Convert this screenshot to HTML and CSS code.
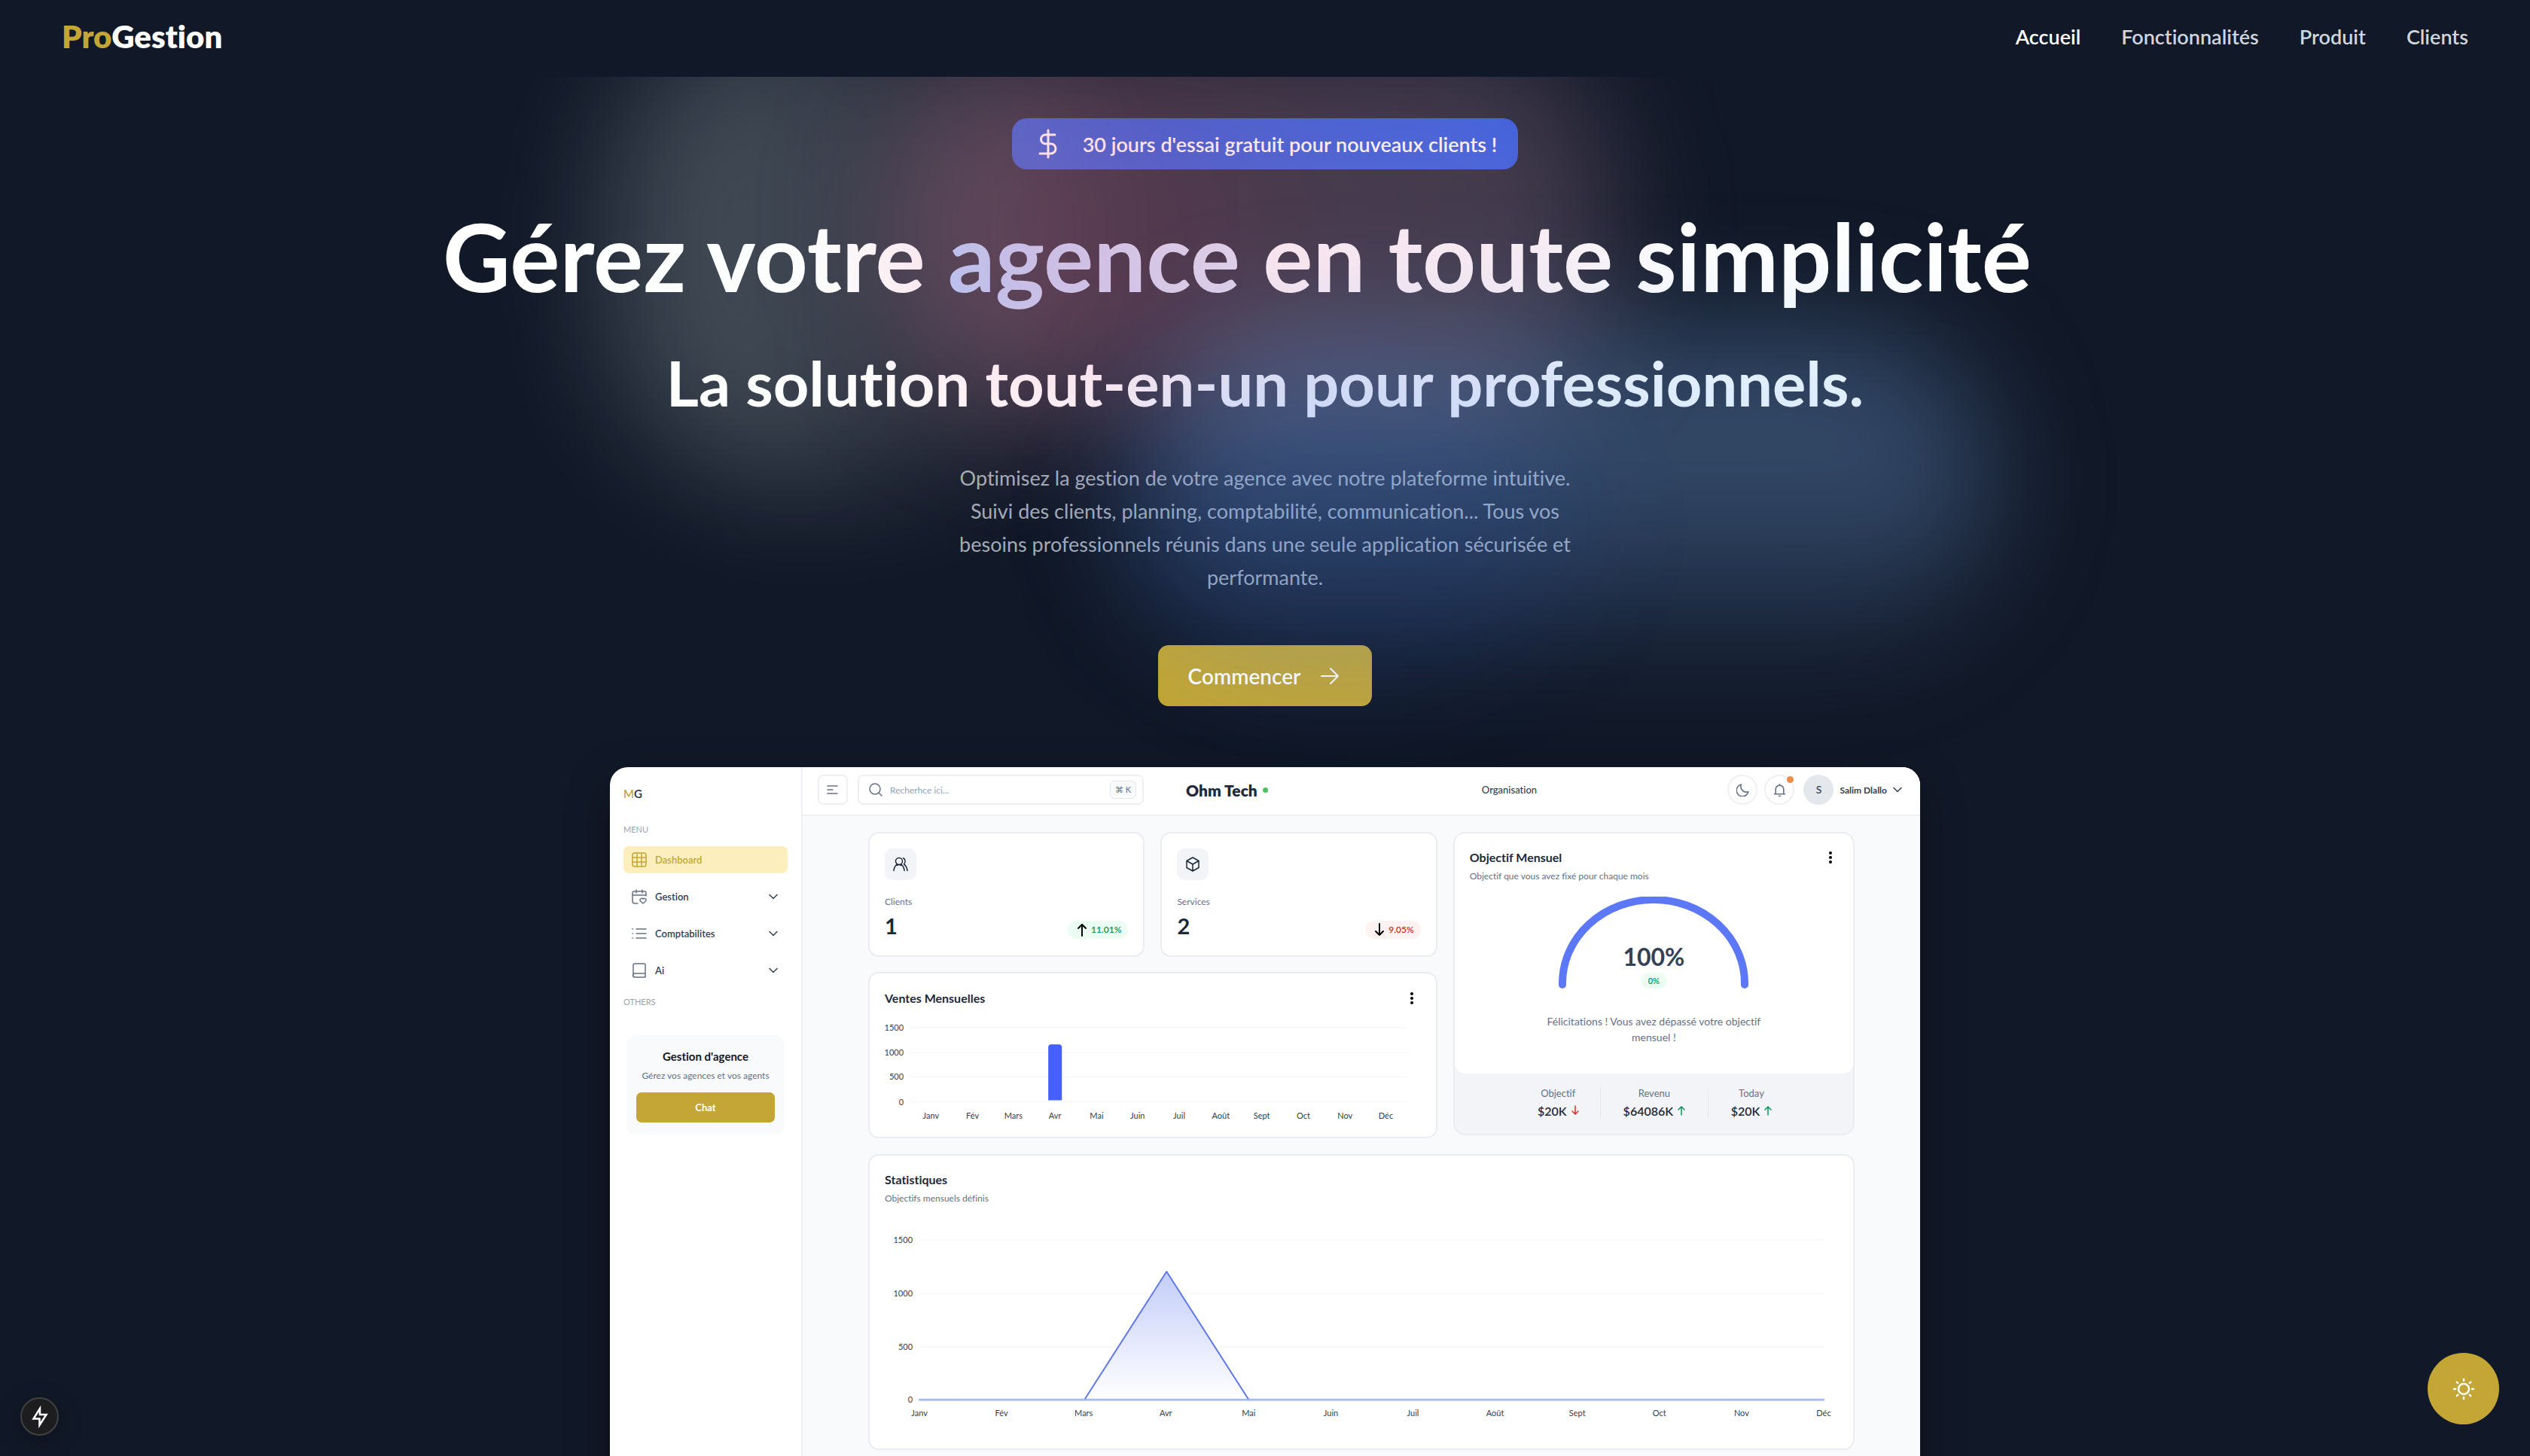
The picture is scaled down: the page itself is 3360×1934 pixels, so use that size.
FILE: index.html
```html
<!DOCTYPE html>
<html lang="fr">
<head>
<meta charset="utf-8">
<meta name="viewport" content="width=device-width, initial-scale=1">
<title>ProGestion</title>
<link rel="stylesheet" href="styles.css">
</head>
<body>
<header class="site-header">
  <a class="brand" href="#"><span class="gold">Pro</span>Gestion</a>
  <nav class="site-nav">
    <a class="current" href="#accueil">Accueil</a>
    <a href="#fonctionnalites">Fonctionnalités</a>
    <a href="#produit">Produit</a>
    <a href="#clients">Clients</a>
  </nav>
</header>

<main class="hero" id="accueil">
  <div class="glow" aria-hidden="true">
    <span class="blob blob-white"></span>
    <span class="blob blob-pink"></span>
    <span class="blob blob-blue"></span>
    <span class="blob blob-deep"></span>
  </div>

  <p class="offer">
    <svg width="28" height="40" viewBox="0 0 28 40" fill="none" stroke="currentColor" stroke-width="3" stroke-linecap="round" stroke-linejoin="round"><path d="M14 2v36M23 8H10.500a6 6 0 0 0 0 12h7a6.500 6.500 0 0 1 0 13H3"/></svg>
    30 jours d'essai gratuit pour nouveaux clients !
  </p>
  <h1>Gérez votre <span class="accent">agence</span> en toute simplicité</h1>
  <h2>La solution tout-en-un pour professionnels.</h2>
  <p class="lead">Optimisez la gestion de votre agence avec notre plateforme intuitive.<br>Suivi des clients, planning, comptabilité, communication... Tous vos<br>besoins professionnels réunis dans une seule application sécurisée et<br>performante.</p>
  <button class="cta" type="button">Commencer
    <svg width="24" height="24" viewBox="0 0 24 24" fill="none" stroke="currentColor" stroke-width="2" stroke-linecap="round" stroke-linejoin="round"><path d="M1 12h22M13 2l10 10-10 10"/></svg>
  </button>

  <section class="app" aria-label="Tableau de bord">
    <aside class="side">
      <div class="side-brand"><span class="gold">M</span>G</div>
      <h3 class="side-label">MENU</h3>
      <nav class="side-nav">
        <a class="active" href="#dashboard"><svg class="ico" viewBox="0 0 20 20"><rect x="1" y="1" width="18" height="18" rx="3"/><path d="M7 1v18M13 1v18M1 7h18M1 13h18"/></svg>Dashboard</a>
        <a href="#gestion"><svg class="ico" viewBox="0 0 20 20"><path d="M8 19H4a3 3 0 0 1-3-3V5a2 2 0 0 1 2-2h14a2 2 0 0 1 2 2v4M1 8h18M6 1v4M14 1v4M15 19l-3.500-3.200a2 2 0 0 1 3.500-2.600 2 2 0 0 1 3.500 2.600z"/></svg>Gestion<svg class="chev" viewBox="0 0 12 12"><path d="M1 3.500l5 5 5-5"/></svg></a>
        <a href="#comptabilites"><svg class="ico" viewBox="0 0 20 20"><path d="M6 4h13M6 10h13M6 16h13M1 4h.5M1 10h.5M1 16h.5"/></svg>Comptabilites<svg class="chev" viewBox="0 0 12 12"><path d="M1 3.500l5 5 5-5"/></svg></a>
        <a href="#ai"><svg class="ico" viewBox="0 0 20 20"><path d="M2 17V3a2 2 0 0 1 2-2h12a2 2 0 0 1 2 2v16H4a2 2 0 0 1 0-5h14"/></svg>Ai<svg class="chev" viewBox="0 0 12 12"><path d="M1 3.500l5 5 5-5"/></svg></a>
      </nav>
      <h3 class="side-label">OTHERS</h3>
      <div class="promo">
        <h4>Gestion d'agence</h4>
        <p>Gérez vos agences et vos agents</p>
        <button type="button">Chat</button>
      </div>
    </aside>

    <div class="work">
      <div class="topbar">
        <button class="square" type="button" aria-label="Menu"><svg viewBox="0 0 16 14"><path d="M1 2h13M1 7h7M1 12h13"/></svg></button>
        <label class="search">
          <svg viewBox="0 0 18 18"><circle cx="8" cy="8" r="7"/><path d="M13 13l4 4"/></svg>
          <input type="search" placeholder="Recherhce ici..." aria-label="Recherche">
          <kbd>⌘ K</kbd>
        </label>
        <strong class="org">Ohm Tech <i></i></strong>
        <a class="org-link" href="#organisation">Organisation</a>
        <div class="tools">
          <button class="round" type="button" aria-label="Mode sombre"><svg viewBox="0 0 16 16"><path d="M6 1a7.500 7.500 0 1 0 9 9A7 7 0 0 1 6 1z"/></svg></button>
          <button class="round bell" type="button" aria-label="Notifications"><svg viewBox="0 0 16 16"><path d="M1.500 13h13M3 13V7a5 5 0 0 1 10 0v6M7 15.500h2M8 2V.8"/></svg></button>
          <button class="user" type="button"><span class="avatar">S</span>Salim Dlallo<svg class="chev" viewBox="0 0 12 12"><path d="M1 3.500l5 5 5-5"/></svg></button>
        </div>
      </div>

      <div class="board">
        <div class="col">
          <div class="pair">
            <article class="card metric">
              <span class="tile"><svg viewBox="0 0 22 22"><circle cx="9" cy="7" r="4.500"/><path d="M2 19.500c0-4 2-6.500 4.300-8.800M11.700 10.700c2.300 2.300 4.300 4.800 4.300 8.800M6.300 12.500c1.700-1.300 3.700-1.300 5.400 0M14.500 2.800c3 1.200 3.500 5.700 1 8 2.500 2 4.200 5 4.500 8.700"/></svg></span>
              <h3>Clients</h3>
              <div class="figure"><b>1</b><span class="pill up"><svg viewBox="0 0 14 18"><path d="M7 17V2M2 7l5-5 5 5"/></svg>11.01%</span></div>
            </article>
            <article class="card metric">
              <span class="tile"><svg viewBox="0 0 22 22"><path d="M11 2l8 4.500v9L11 20l-8-4.500v-9zM3 6.500l8 4.500 8-4.500M11 11v9"/></svg></span>
              <h3>Services</h3>
              <div class="figure"><b>2</b><span class="pill down"><svg viewBox="0 0 14 18"><path d="M7 1v15M2 11l5 5 5-5"/></svg>9.05%</span></div>
            </article>
          </div>
          <article class="card sales">
            <div class="card-head"><h3>Ventes Mensuelles</h3><button class="dots" type="button" aria-label="Options"><svg viewBox="0 0 4 16"><circle cx="2" cy="2" r="2"/><circle cx="2" cy="8" r="2"/><circle cx="2" cy="14" r="2"/></svg></button></div>
            <svg class="chart" viewBox="0 0 706 140" role="img" aria-label="Ventes par mois">
              <g class="grid"><path d="M34 15h656M34 48h656M34 80h656M34 113h656"/></g>
              <g class="ylab"><text x="25" y="19">1500</text><text x="25" y="52">1000</text><text x="25" y="84">500</text><text x="25" y="117">0</text></g>
              <path class="bar" d="M216 111V41a4 4 0 0 1 4-4h10a4 4 0 0 1 4 4v70z"/>
              <g class="xlab"><text x="61" y="135">Janv</text><text x="116" y="135">Fév</text><text x="170" y="135">Mars</text><text x="225" y="135">Avr</text><text x="280" y="135">Mai</text><text x="334" y="135">Juin</text><text x="389" y="135">Juil</text><text x="444" y="135">Août</text><text x="498" y="135">Sept</text><text x="553" y="135">Oct</text><text x="608" y="135">Nov</text><text x="662" y="135">Déc</text></g>
            </svg>
          </article>
        </div>

        <article class="goal">
          <div class="goal-main">
            <div class="card-head"><h3>Objectif Mensuel</h3><button class="dots" type="button" aria-label="Options"><svg viewBox="0 0 4 16"><circle cx="2" cy="2" r="2"/><circle cx="2" cy="8" r="2"/><circle cx="2" cy="14" r="2"/></svg></button></div>
            <p class="sub">Objectif que vous avez fixé pour chaque mois</p>
            <div class="gauge">
              <svg viewBox="0 0 254 122"><path d="M6 117V115A121 111 0 0 1 248 115V117" fill="none" stroke="#5d78f7" stroke-width="10" stroke-linecap="round"/></svg>
              <div class="gauge-text"><b>100%</b><span>0%</span></div>
            </div>
            <p class="cheer">Félicitations ! Vous avez dépassé votre objectif<br>mensuel !</p>
          </div>
          <dl class="totals">
            <div><dt>Objectif</dt><dd>$20K <svg class="neg" viewBox="0 0 10 14"><path d="M5 1v11M1 8l4 4 4-4"/></svg></dd></div>
            <div><dt>Revenu</dt><dd>$64086K <svg class="pos" viewBox="0 0 10 14"><path d="M5 13V2M1 6l4-4 4 4"/></svg></dd></div>
            <div><dt>Today</dt><dd>$20K <svg class="pos" viewBox="0 0 10 14"><path d="M5 13V2M1 6l4-4 4 4"/></svg></dd></div>
          </dl>
        </article>

        <article class="card stats">
          <div class="card-head"><h3>Statistiques</h3></div>
          <p class="sub">Objectifs mensuels définis</p>
          <svg class="chart" viewBox="0 0 1263 262" role="img" aria-label="Statistiques par mois">
            <defs><linearGradient id="area" x1="0" y1="0" x2="0" y2="1"><stop offset="0" stop-color="#c3cdf9"/><stop offset="1" stop-color="#fff"/></linearGradient></defs>
            <g class="grid"><path d="M48 19h1198M48 90h1198M48 161h1198"/></g>
            <path d="M265 231L374 61l109 170z" fill="url(#area)" stroke="none"/>
            <path d="M46 231h1200" stroke="#c8d5f8" stroke-width="3"/>
            <path d="M265 231L374 61l109 170" fill="none" stroke="#5f78ea" stroke-width="2"/>
            <path d="M46 231h1200" stroke="#a0b7f0" stroke-width="2"/>
            <g class="ylab"><text x="37" y="23">1500</text><text x="37" y="94">1000</text><text x="37" y="165">500</text><text x="37" y="235">0</text></g>
            <g class="xlab"><text x="46" y="253">Janv</text><text x="155" y="253">Fév</text><text x="264" y="253">Mars</text><text x="373" y="253">Avr</text><text x="483" y="253">Mai</text><text x="592" y="253">Juin</text><text x="701" y="253">Juil</text><text x="810" y="253">Août</text><text x="919" y="253">Sept</text><text x="1028" y="253">Oct</text><text x="1137" y="253">Nov</text><text x="1246" y="253">Déc</text></g>
          </svg>
        </article>
      </div>
    </div>
  </section>
</main>

<button class="fab fab-bolt" type="button" aria-label="Outils"><svg viewBox="0 0 24 30" width="24" height="30"><path d="M12 4L3.500 17.500h8V26L20.500 12h-8.500z" fill="none" stroke="#fff" stroke-width="2.500"/></svg></button>
<button class="fab fab-theme" type="button" aria-label="Changer de thème"><svg viewBox="0 0 30 30" width="30" height="30" fill="none" stroke="#fff" stroke-width="2.500" stroke-linecap="round"><circle cx="15" cy="15" r="7"/><path d="M15 2v2M15 26v2M2 15h2M26 15h2M5.800 5.800l1.400 1.400M22.800 22.800l1.400 1.400M5.800 24.200l1.400-1.400M22.800 7.200l1.400-1.400"/></svg></button>
</body>
</html>
```
FILE: styles.css
```css
*, *::before, *::after { box-sizing: border-box; }
body {
  margin: 0;
  height: 100vh;
  display: flex;
  flex-direction: column;
  overflow: hidden;
  background: #111827;
  color: #fff;
  font-family: Lato, "Liberation Sans", sans-serif;
  font-variant-ligatures: no-common-ligatures;
}
h1, h2, h3, h4, p, dl, dd { margin: 0; }
a { color: inherit; text-decoration: none; }
button, input { font: inherit; color: inherit; border: 0; background: none; padding: 0; }
svg { flex: none; }
.gold { color: #c3a635; }

/* header */
.site-header {
  position: relative;
  z-index: 3;
  flex: none;
  height: 102px;
  padding: 0 82px 6px;
  display: flex;
  align-items: center;
  justify-content: space-between;
  background: #111827;
}
.brand { font-size: 42px; font-weight: 800; }
.site-nav { display: flex; gap: 54px; font-size: 27px; font-weight: 600; color: #d1d5db; }
.site-nav .current { color: #fff; }

/* hero */
.hero {
  position: relative;
  flex: 1;
  min-height: 0;
  padding-top: 55px;
  display: flex;
  flex-direction: column;
  align-items: center;
  overflow: hidden;
}
.glow { position: absolute; inset: 0; z-index: 1; pointer-events: none; }
.blob { position: absolute; border-radius: 50%; filter: blur(80px); }
.blob-white { left: 24%; top: -80px; width: 640px; height: 620px; border-radius: 240px; background: linear-gradient(90deg, rgba(240, 252, 250, .21) 40%, rgba(240, 240, 245, .1) 65%, rgba(240, 240, 245, .06)); }
.blob-pink { left: 35%; top: -50px; width: 960px; height: 500px; border-radius: 200px; background: radial-gradient(circle at 26% 54%, rgba(250, 125, 165, .31), rgba(235, 165, 195, .25) 45%, rgba(225, 175, 205, .23)); }
.blob-blue { left: 45%; top: 330px; width: 1130px; height: 430px; border-radius: 200px; background: linear-gradient(180deg, rgba(130, 185, 253, .3) 50%, rgba(90, 140, 220, .1)); }
.blob-deep { left: 44%; top: 400px; width: 620px; height: 400px; background: rgba(37, 99, 235, .1); }

.offer {
  flex: none;
  height: 68px;
  padding: 0 28px 0 34px;
  display: flex;
  align-items: center;
  gap: 32px;
  border-radius: 20px;
  background: linear-gradient(90deg, #1f4dc8, #1f52e0);
  font-size: 27px;
  font-weight: 600;
}
h1 { margin-top: 40px; padding-right: 74px; font-size: 124px; line-height: 150px; font-weight: 700; white-space: nowrap; }
.accent { background: linear-gradient(90deg, #a4ccff, #dde6fa); -webkit-background-clip: text; background-clip: text; color: transparent; }
h2 { margin-top: 43px; font-size: 83px; line-height: 100px; font-weight: 700; white-space: nowrap; }
.lead { margin-top: 55px; font-size: 27px; line-height: 44px; text-align: center; color: #a3aab6; }
.cta {
  flex: none;
  height: 81px;
  margin-top: 68px;
  padding: 0 44px 0 40px;
  display: flex;
  align-items: center;
  gap: 27px;
  border-radius: 14px;
  background: #c3a635;
  font-size: 28px;
  font-weight: 600;
}

/* product preview */
.app {
  position: relative;
  z-index: 2;
  flex: none;
  width: 100%;
  max-width: 1740px;
  min-height: 1000px;
  margin-top: 81px;
  display: flex;
  border-radius: 24px 24px 0 0;
  overflow: hidden;
  background: #fff;
  color: #344054;
  font-size: 12px;
  box-shadow: 0 20px 60px rgba(0, 0, 0, .3);
}
.app svg { fill: none; stroke: currentColor; stroke-linecap: round; stroke-linejoin: round; }
.side { flex: none; width: 256px; padding: 25px 18px 0; border-right: 2px solid #eff0f3; }
.side-brand { font-size: 15px; line-height: 20px; font-weight: 600; color: #1d2939; }
.side-label { margin-top: 30px; font-size: 11px; line-height: 16px; font-weight: 400; color: #98a2b3; }
.side-nav { margin-top: 14px; display: flex; flex-direction: column; gap: 13px; }
.side-nav a { height: 36px; padding: 0 13px 0 11px; display: flex; align-items: center; gap: 11px; border-radius: 7px; font-size: 13px; font-weight: 600; }
.side-nav .active { background: #fcefbd; color: #c3a635; }
.ico { width: 20px; height: 20px; color: #667085; stroke-width: 1.5; }
.active .ico { color: inherit; }
.chev { width: 12px; height: 12px; stroke-width: 1.5; margin-left: auto; }
.side-nav + .side-label { margin-top: 16px; }
.promo { margin: 36px 4px 0; padding: 18px 13px 17px; border-radius: 14px; background: #f9fafb; text-align: center; }
.promo h4 { font-size: 15px; line-height: 20px; font-weight: 700; color: #101828; }
.promo p { margin: 7px -12px 13px; font-size: 12px; line-height: 18px; color: #667085; white-space: nowrap; }
.promo button { width: 100%; height: 40px; border-radius: 7px; background: #c3a635; color: #fff; font-size: 13px; font-weight: 700; }

.work { flex: 1; min-width: 0; background: #f9fafc; }
.topbar { height: 65px; padding: 0 24px 3px 20px; display: flex; align-items: center; border-bottom: 2px solid #eff0f3; background: #fff; }
.square { width: 40px; height: 40px; display: grid; place-items: center; border: 2px solid #eff0f3; border-radius: 7px; color: #667085; }
.square svg { width: 16px; height: 14px; stroke-width: 1.5; }
.search { width: 380px; height: 40px; margin-left: 13px; padding: 0 8px 0 13px; display: flex; align-items: center; gap: 10px; border: 2px solid #eff0f3; border-radius: 7px; color: #667085; }
.search svg { width: 18px; height: 18px; stroke-width: 1.5; }
.search input { flex: 1; min-width: 0; outline: 0; }
.search input::placeholder { color: #98a2b3; opacity: 1; }
kbd { height: 24px; padding: 0 6px; border: 1px solid #e4e7ec; border-radius: 6px; background: #f9fafb; font: 11px/22px Lato, "DejaVu Sans", sans-serif; }
.org { margin-left: 56px; display: flex; align-items: center; gap: 7px; font-size: 21px; font-weight: 800; color: #1d2939; }
.org i { width: 7px; height: 7px; border-radius: 50%; background: #4fc163; }
.org-link { margin-left: 284px; font-size: 13px; font-weight: 500; }
.tools { margin-left: auto; display: flex; align-items: center; gap: 9px; }
.round { position: relative; width: 40px; height: 40px; display: grid; place-items: center; border: 2px solid #eff0f3; border-radius: 50%; color: #667085; }
.round svg { width: 17px; height: 17px; stroke-width: 1.5; }
.bell::after { content: ""; position: absolute; top: 0; right: -1px; width: 9px; height: 9px; border-radius: 50%; background: #f08c4a; }
.user { margin-left: 3px; display: flex; align-items: center; gap: 8px; font-weight: 700; }
.avatar { width: 40px; height: 40px; border-radius: 50%; background: #e4e7ec; line-height: 40px; text-align: center; font-size: 14px; font-weight: 500; }

.board { padding: 21px 87px 0; display: grid; grid-template-columns: 754fr 532fr; gap: 21px; align-items: start; }
.col { display: grid; gap: 20px; }
.pair { display: grid; grid-template-columns: 1fr 1fr; gap: 21px; }
.card { border: 2px solid #eaecf0; border-radius: 14px; background: #fff; padding: 20px; }
.metric { height: 166px; }
.tile { width: 42px; height: 42px; display: grid; place-items: center; border-radius: 10px; background: #f2f4f7; color: #1d2939; }
.tile svg { width: 22px; height: 22px; stroke-width: 1.5; }
.metric h3 { margin-top: 20px; font-size: 12px; line-height: 18px; font-weight: 400; color: #667085; }
.figure { display: flex; align-items: center; justify-content: space-between; margin-top: 6px; }
.figure b { font-size: 29px; line-height: 34px; color: #1d2939; }
.pill { height: 24px; margin-top: 9px; padding: 0 9px 0 12px; display: flex; align-items: center; gap: 5px; border-radius: 12px; font-size: 12px; font-weight: 600; }
.pill svg { width: 14px; height: 18px; stroke: #000; stroke-width: 2; }
.up { background: #ecfdf3; color: #039855; }
.down { background: #fef3f2; color: #d92d20; }
.card-head { display: flex; align-items: center; justify-content: space-between; height: 24px; }
.card-head h3 { font-size: 16px; line-height: 24px; font-weight: 700; color: #1d2939; }
.dots { width: 20px; height: 24px; display: grid; place-items: center; }
.dots svg { width: 4px; height: 16px; fill: #000; stroke: none; }
.sub { font-size: 12px; line-height: 18px; color: #667085; }
.chart { display: block; width: 100%; height: auto; overflow: visible; }
.app .grid { stroke: #f2f4f7; stroke-width: 1; }
.app text { stroke: none; fill: #373d3f; font-size: 11px; }
.ylab { text-anchor: end; }
.xlab { text-anchor: middle; }
.app .bar { fill: #465fff; stroke: none; }
.sales { height: 221px; padding: 21px 22px 0 20px; }
.sales .chart { margin-top: 12px; }

.goal { border: 2px solid #eaecf0; border-radius: 16px; background: #f2f4f7; }
.goal-main { padding: 20px 20px 38px; border-radius: 14px; background: #fff; }
.goal-main .sub { margin-top: 4px; }
.gauge { width: 254px; margin: 18px auto 0; display: grid; }
.gauge > * { grid-area: 1 / 1; }
.gauge svg { width: 254px; height: 122px; }
.gauge-text { align-self: end; display: flex; flex-direction: column; align-items: center; gap: 3px; }
.gauge-text b { font-size: 32px; line-height: 36px; font-weight: 700; }
.gauge-text span { padding: 0 10px; border-radius: 11px; background: #ecfdf3; color: #039855; font-size: 11px; line-height: 21px; font-weight: 600; }
.cheer { margin-top: 33px; font-size: 14px; line-height: 21px; text-align: center; color: #667085; }
.totals { height: 80px; padding: 18px 78px 0 82px; display: grid; grid-template-columns: 110fr 142fr 114fr; text-align: center; }
.totals div { border-left: 1px solid #e4e7ec; height: 42px; }
.totals div:first-child { border: 0; }
.totals dt { font-size: 13px; line-height: 16px; color: #667085; }
.totals dd { margin-top: 6px; font-size: 16px; line-height: 20px; font-weight: 600; color: #1d2939; white-space: nowrap; }
.totals svg { width: 10px; height: 14px; margin-left: 2px; stroke-width: 1.5; }
.neg { color: #d92d20; }
.pos { color: #039855; }

.stats { grid-column: 1 / -1; height: 393px; padding-right: 22px; }
.stats .sub { margin-top: 4px; }
.stats .chart { margin-top: 27px; }

/* floating controls */
.fab { position: fixed; z-index: 4; display: grid; place-items: center; border-radius: 50%; }
.fab-bolt { left: 27px; bottom: 27px; width: 51px; height: 51px; border: 2px solid #414141; background: #1d1d1f; box-shadow: 0 8px 32px rgba(0, 0, 0, .25); }
.fab-theme { right: 41px; bottom: 42px; width: 95px; height: 95px; background: #c3a635; }
```
